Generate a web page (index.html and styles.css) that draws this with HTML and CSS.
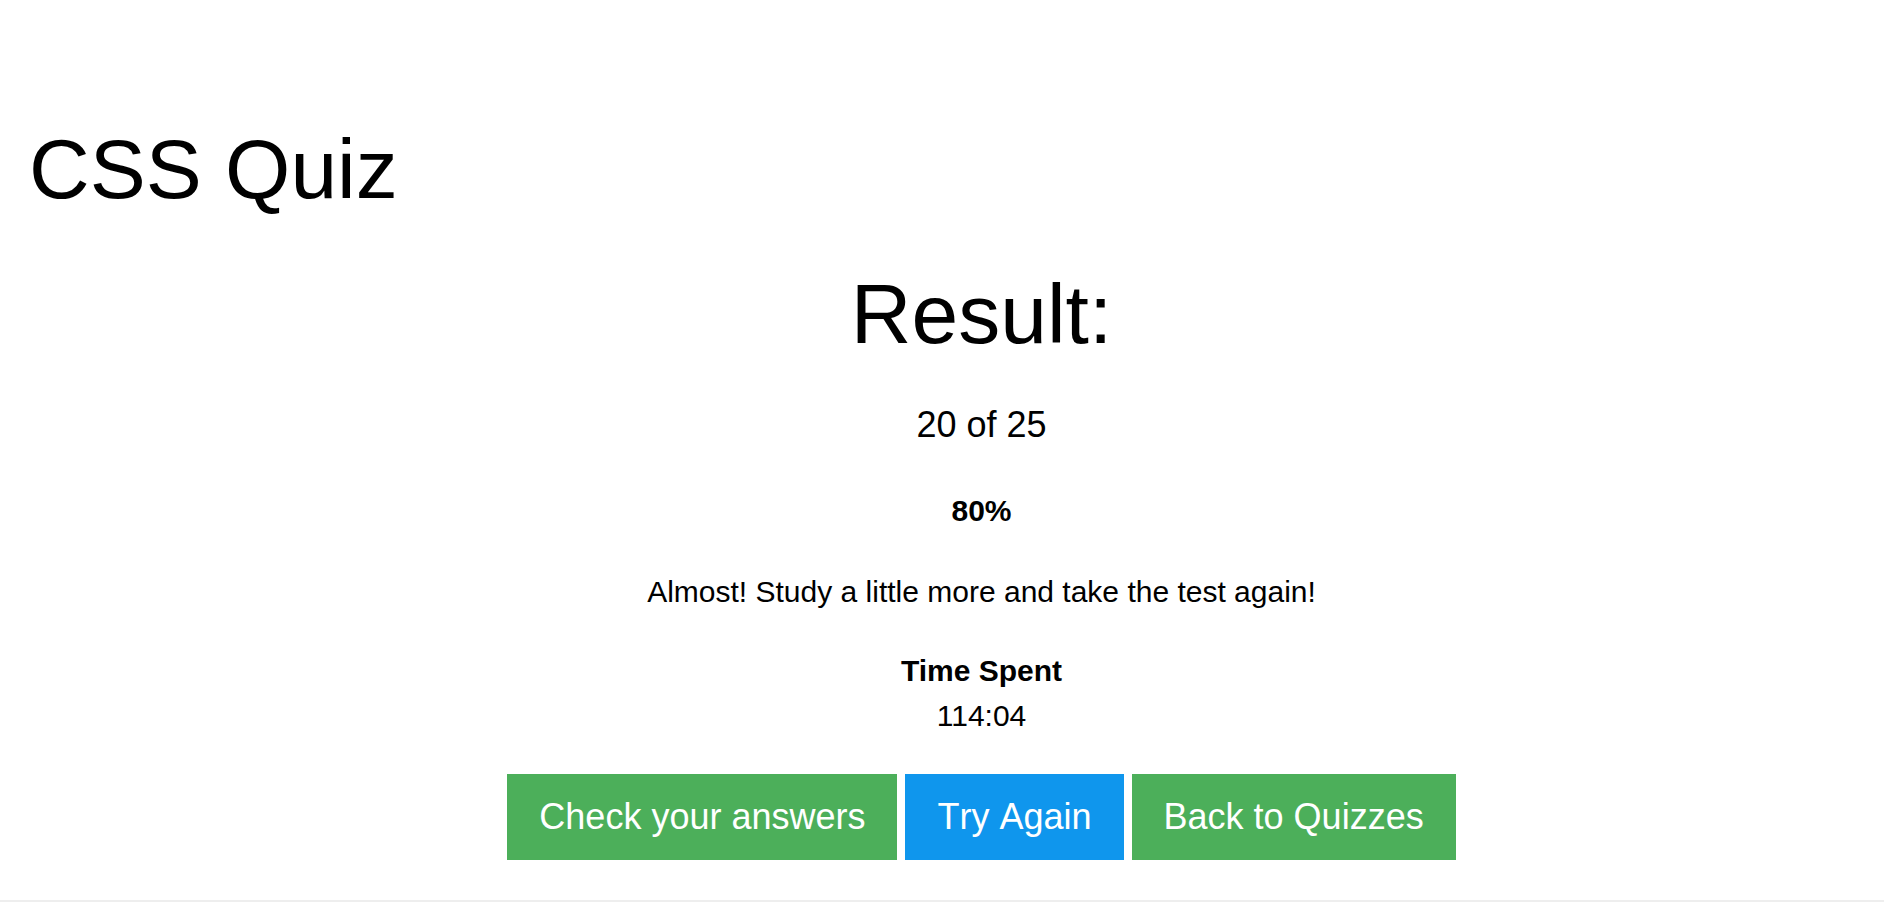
FILE: index.html
```html
<!DOCTYPE html>
<html lang="en">
<head>
<meta charset="utf-8">
<title>CSS Quiz</title>
<link rel="stylesheet" href="styles.css">
</head>
<body>
<div class="page">
  <h1 class="quiz-title">CSS Quiz</h1>
  <div class="result">
    <h2 class="result-title">Result:</h2>
    <p class="score">20 of 25</p>
    <p class="percent">80%</p>
    <p class="message">Almost! Study a little more and take the test again!</p>
    <div class="time">
      <div class="time-label">Time Spent</div>
      <div class="time-value">114:04</div>
    </div>
    <div class="actions">
      <a class="btn btn-green" href="#">Check your answers</a>
      <a class="btn btn-blue" href="#">Try Again</a>
      <a class="btn btn-green" href="#">Back to Quizzes</a>
    </div>
  </div>
</div>
<div class="divider"></div>
</body>
</html>
```

FILE: styles.css
```css
html, body {
  margin: 0;
  padding: 0;
  background: #ffffff;
}

body {
  font-family: "Liberation Sans", Arial, Helvetica, sans-serif;
  color: #000000;
  font-size: 30px;
  line-height: 1.5;
}

.page {
  padding: 119px 0 0 29px;
}

.quiz-title {
  margin: 0;
  font-size: 84px;
  font-weight: normal;
  line-height: 100px;
}

.result {
  margin-left: 50px;
  text-align: center;
}

.result-title {
  margin: 45px 0 0;
  font-size: 84px;
  font-weight: normal;
  line-height: 100px;
}

.score {
  margin: 34px 0 0;
  font-size: 36px;
  line-height: 54px;
}

.percent {
  margin: 36px 0 0;
  font-weight: bold;
}

.message {
  margin: 36px 0 0;
}

.time {
  margin-top: 34px;
}

.time-label {
  font-weight: bold;
}

.actions {
  margin-top: 36px;
  display: flex;
  justify-content: center;
  gap: 8px;
}

.btn {
  display: block;
  padding: 16px 32px;
  font-size: 36px;
  line-height: 54px;
  color: #ffffff;
  text-decoration: none;
  font-kerning: none;
}

.btn-green {
  background: #4caf5a;
}

.btn-blue {
  background: #0f96ed;
}

.divider {
  margin-top: 40px;
  height: 2px;
  background: #eeeeee;
}
```
